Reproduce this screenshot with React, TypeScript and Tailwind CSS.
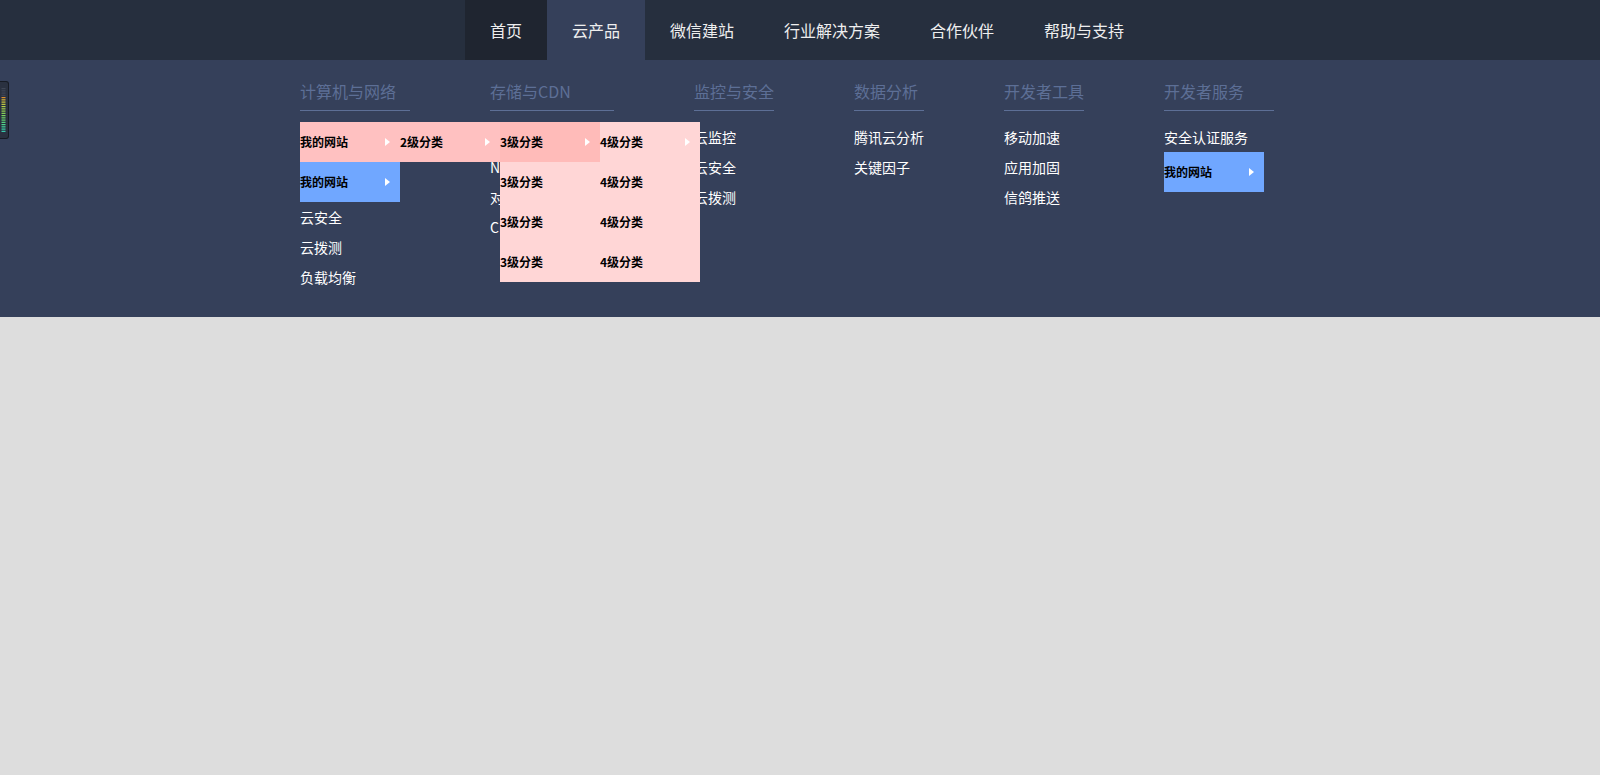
import React from 'react';

const navItems = ['首页', '云产品', '微信建站', '行业解决方案', '合作伙伴', '帮助与支持'];

function Arrow() {
    return <span className="w-0 h-0 border-y-[4px] border-y-transparent border-l-[5px] border-l-white" />;
}

function MenuItem({ label, bg, arrow = true, children }: { label: string; bg: string; arrow?: boolean; children?: React.ReactNode }) {
    return (
        <div className={`relative flex items-center justify-between h-10 w-[100px] pr-[10px] text-xs font-bold text-black ${bg}`}>
            <span>{label}</span>
            {arrow && <Arrow />}
            {children}
        </div>
    );
}

function TextItem({ label }: { label: string }) {
    return <div className="h-[30px] leading-[30px] text-sm text-white whitespace-nowrap">{label}</div>;
}

function Column({ title, width, children }: { title: string; width: string; children: React.ReactNode }) {
    return (
        <div className={`flex flex-col ${width}`}>
            <div className="pt-[19px] pb-[7px] text-base leading-6 text-[#5d6f96] border-b border-[#5d6f96] whitespace-nowrap">
                {title}
            </div>
            <div className="mt-[11px] flex flex-col">{children}</div>
        </div>
    );
}

function LevelMeter() {
    const colors = [
        '#3f4656', '#3f4656', '#3f4656', '#3f4656', '#e0902c', '#d8b63a', '#cfc83c', '#c4cf40',
        '#b5d246', '#a6d44c', '#98d652', '#8ad858', '#7cd95e', '#6fda66', '#62da72', '#56d980',
        '#4cd88e', '#44d69c', '#3dd4a8', '#38d2b2',
    ];
    return (
        <div className="absolute left-0 top-[81px] w-[9px] h-[58px] bg-[#2a3140] border border-l-0 border-[#171b24] rounded-r-[3px]">
            <svg width="8" height="56" viewBox="0 0 8 56">
                {colors.map((c, i) => (
                    <rect key={i} x="1.5" y={6 + i * 2.25} width="4" height="1.2" fill={c} />
                ))}
            </svg>
        </div>
    );
}

export default function App() {
    return (
        <div className="relative min-h-screen bg-[#dddddd]" style={{ fontFamily: '"Noto Sans CJK SC", "Noto Sans", sans-serif' }}>
            {/* Top nav */}
            <div className="h-[60px] bg-[#262f3e] flex pl-[465px]">
                {navItems.map((item, i) => (
                    <div
                        key={item}
                        className={`h-full flex items-center px-[25px] text-base text-[#eeeeee] ${
                            i === 0 ? 'bg-[#1f2530]' : i === 1 ? 'bg-[#35405a]' : ''
                        }`}
                    >
                        {item}
                    </div>
                ))}
            </div>

            {/* Dropdown */}
            <div className="h-[257px] bg-[#35405a] flex pl-[300px] gap-[80px]">
                <Column title="计算机与网络" width="w-[110px]">
                    <MenuItem label="我的网站" bg="bg-[#ffc1c1]">
                        <div className="absolute left-full top-0 z-10">
                            <MenuItem label="2级分类" bg="bg-[#ffc1c1]">
                                <div className="absolute left-full top-0 flex flex-col bg-[#ffd6d6]">
                                    <MenuItem label="3级分类" bg="bg-[#ffbbb9]">
                                        <div className="absolute left-full top-0 flex flex-col bg-[#ffd6d6]">
                                            <MenuItem label="4级分类" bg="bg-[#ffd6d6]" />
                                            <MenuItem label="4级分类" bg="bg-[#ffd6d6]" arrow={false} />
                                            <MenuItem label="4级分类" bg="bg-[#ffd6d6]" arrow={false} />
                                            <MenuItem label="4级分类" bg="bg-[#ffd6d6]" arrow={false} />
                                        </div>
                                    </MenuItem>
                                    <MenuItem label="3级分类" bg="bg-[#ffd6d6]" arrow={false} />
                                    <MenuItem label="3级分类" bg="bg-[#ffd6d6]" arrow={false} />
                                    <MenuItem label="3级分类" bg="bg-[#ffd6d6]" arrow={false} />
                                </div>
                            </MenuItem>
                        </div>
                    </MenuItem>
                    <MenuItem label="我的网站" bg="bg-[#70a7ff]" />
                    <TextItem label="云安全" />
                    <TextItem label="云拨测" />
                    <TextItem label="负载均衡" />
                </Column>

                <Column title="存储与CDN" width="w-[124px]">
                    <TextItem label="云存储" />
                    <TextItem label="NAS文件存储" />
                    <TextItem label="对象存储" />
                    <TextItem label="CDN加速" />
                </Column>

                <Column title="监控与安全" width="w-[80px]">
                    <TextItem label="云监控" />
                    <TextItem label="云安全" />
                    <TextItem label="云拨测" />
                </Column>

                <Column title="数据分析" width="w-[70px]">
                    <TextItem label="腾讯云分析" />
                    <TextItem label="关键因子" />
                </Column>

                <Column title="开发者工具" width="w-[80px]">
                    <TextItem label="移动加速" />
                    <TextItem label="应用加固" />
                    <TextItem label="信鸽推送" />
                </Column>

                <Column title="开发者服务" width="w-[110px]">
                    <TextItem label="安全认证服务" />
                    <MenuItem label="我的网站" bg="bg-[#70a7ff]" />
                </Column>
            </div>

            <LevelMeter />
        </div>
    );
}
